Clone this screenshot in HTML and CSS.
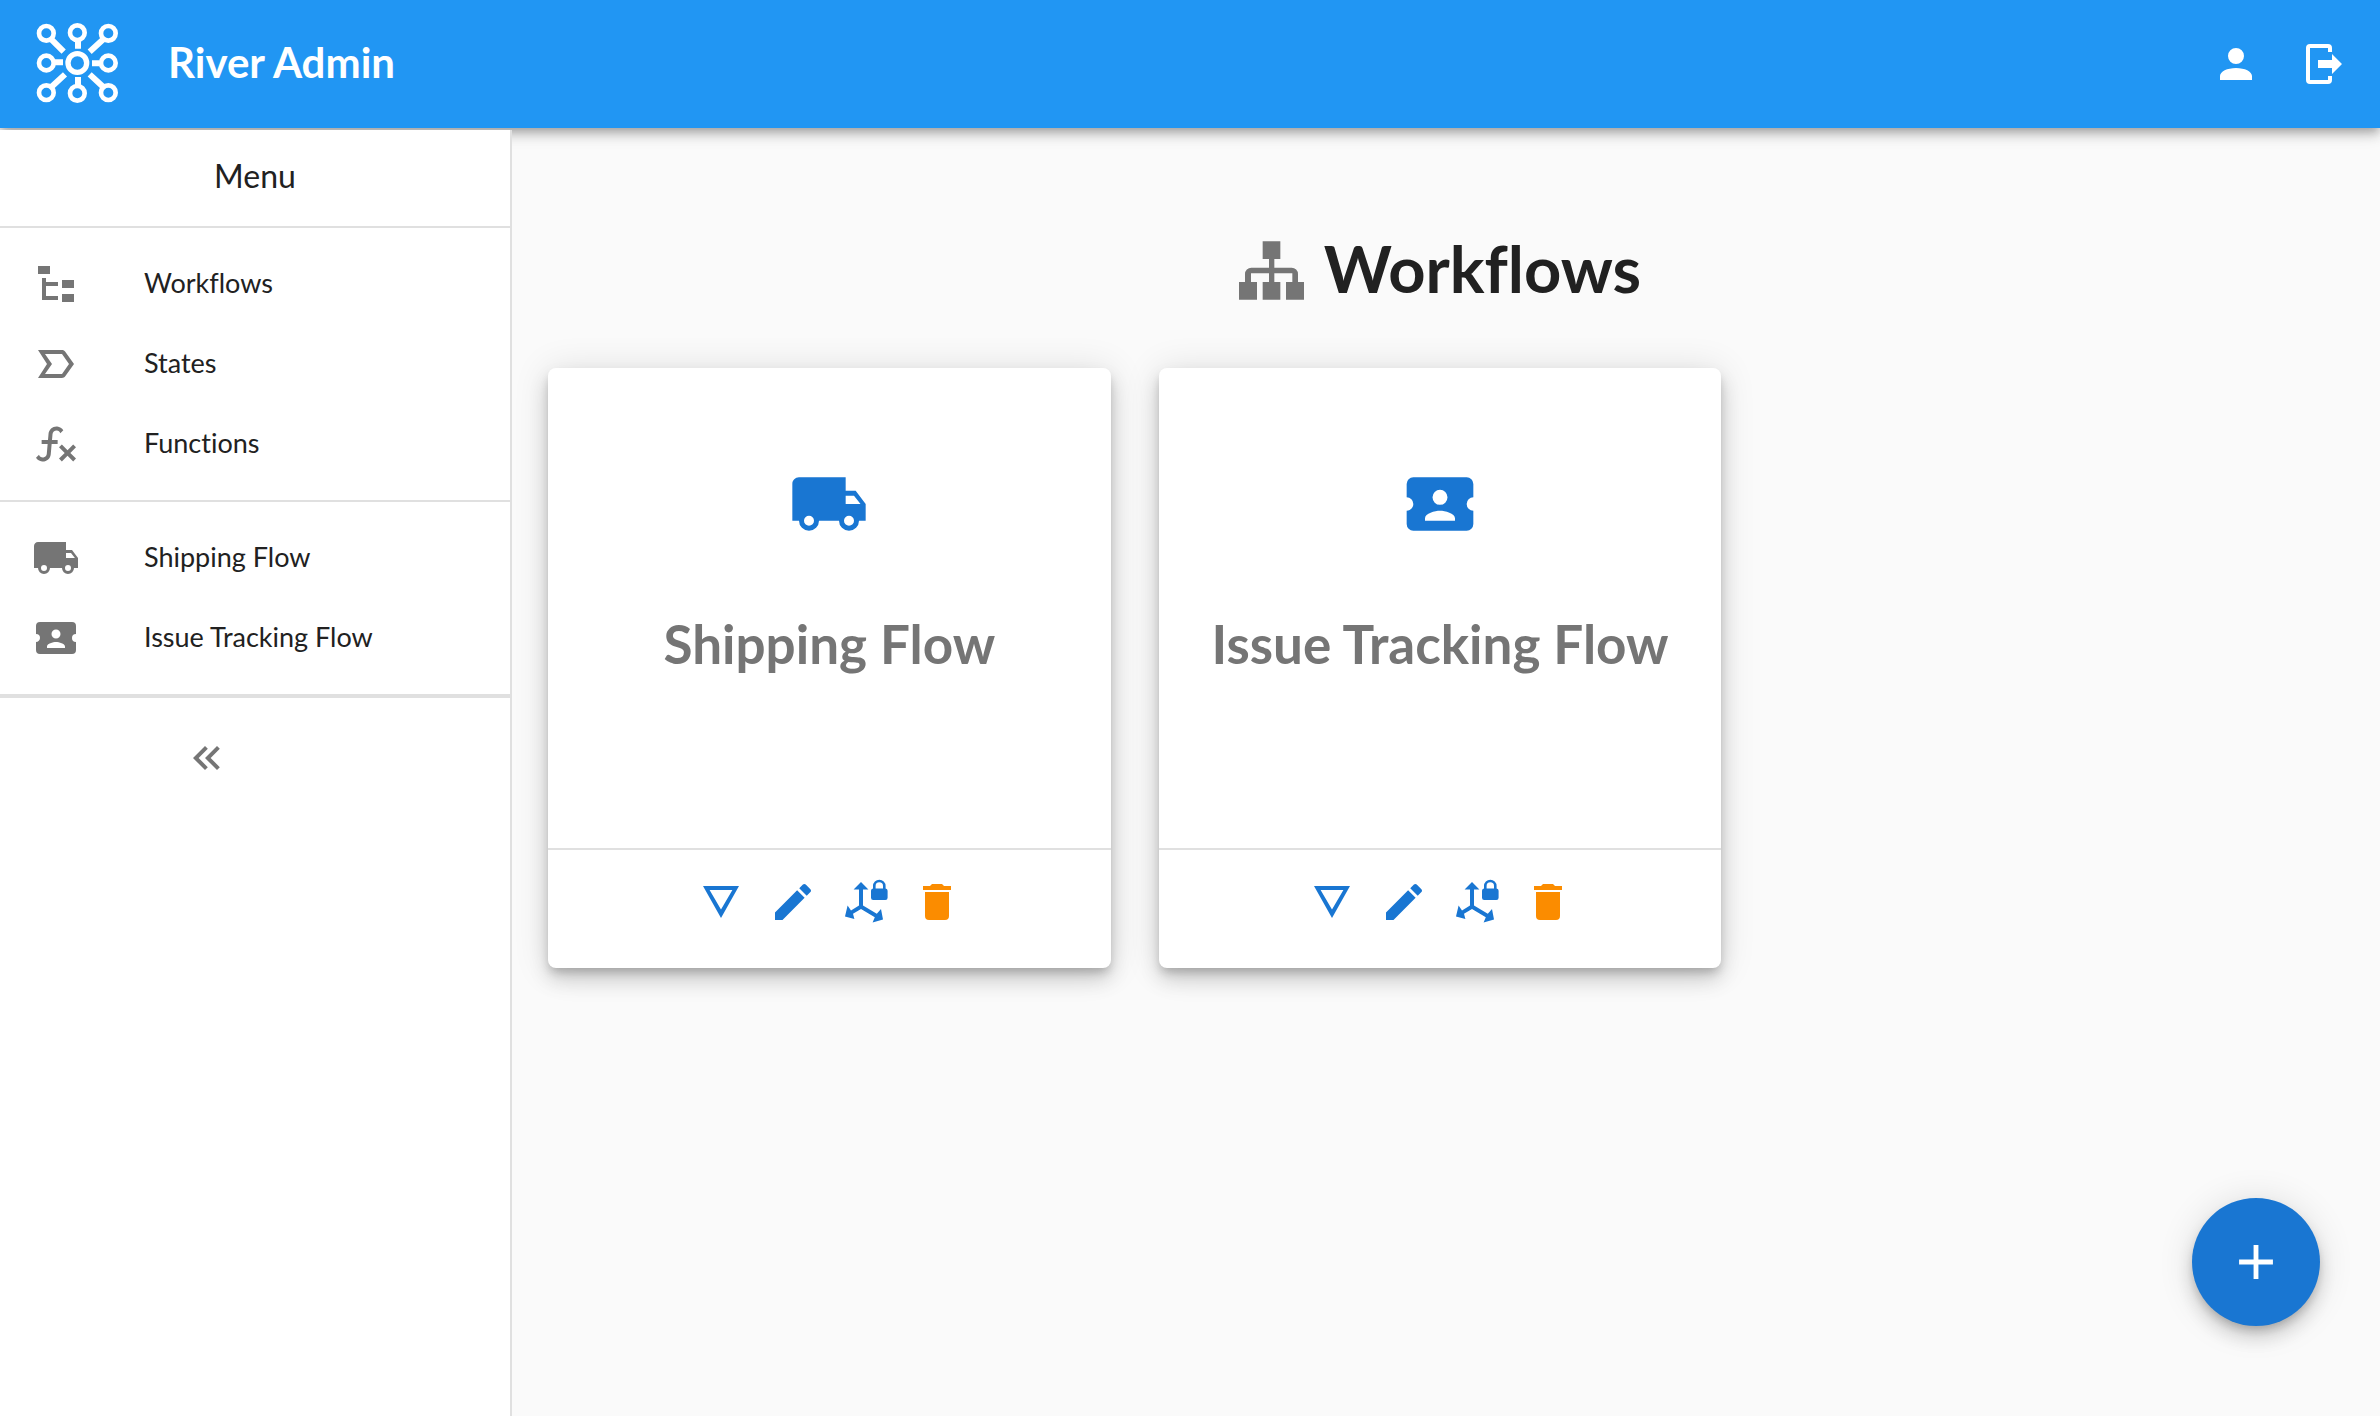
FILE: index.html
```html
<!DOCTYPE html>
<html lang="en">
<head>
  <meta charset="utf-8">
  <meta name="viewport" content="width=device-width, initial-scale=1">
  <title>River Admin</title>
  <link rel="stylesheet" href="styles.css">
</head>
<body>
  <svg class="sprite" aria-hidden="true">
    <symbol id="truck" viewBox="0 0 24 24"><path d="M18,18.5A1.5,1.5 0 0,1 16.5,17A1.5,1.5 0 0,1 18,15.5A1.5,1.5 0 0,1 19.5,17A1.5,1.5 0 0,1 18,18.5M19.5,9.5L21.46,12H17V9.5M6,18.5A1.5,1.5 0 0,1 4.5,17A1.5,1.5 0 0,1 6,15.5A1.5,1.5 0 0,1 7.5,17A1.5,1.5 0 0,1 6,18.5M20,8H17V4H3C1.89,4 1,4.89 1,6V17H3A3,3 0 0,0 6,20A3,3 0 0,0 9,17H15A3,3 0 0,0 18,20A3,3 0 0,0 21,17H23V12L20,8Z"/></symbol>
    <symbol id="ticket" viewBox="0 0 24 24"><path d="M20,12A2,2 0 0,0 22,14V18A2,2 0 0,1 20,20H4A2,2 0 0,1 2,18V14C3.11,14 4,13.1 4,12A2,2 0 0,0 2,10V6A2,2 0 0,1 4,4H20A2,2 0 0,1 22,6V10A2,2 0 0,0 20,12M16.5,16.25C16.5,14.75 13.5,14 12,14C10.5,14 7.5,14.75 7.5,16.25V17H16.5V16.25M12,12.25A2.25,2.25 0 0,0 14.25,10A2.25,2.25 0 0,0 12,7.75A2.25,2.25 0 0,0 9.75,10A2.25,2.25 0 0,0 12,12.25Z"/></symbol>
    <symbol id="details" viewBox="0 0 24 24"><path d="M6.3,6H17.7L12,15.8L6.3,6M3,4L12,20L21,4H3Z"/></symbol>
    <symbol id="pencil" viewBox="0 0 24 24"><path d="M20.71,7.04C21.1,6.65 21.1,6 20.71,5.63L18.37,3.29C18,2.9 17.35,2.9 16.96,3.29L15.12,5.12L18.87,8.87M3,17.25V21H6.75L17.81,9.93L14.06,6.18L3,17.25Z"/></symbol>
    <symbol id="axis-lock" viewBox="0 0 24 24">
      <path d="M10,2L13.7,5.8H11V13.7L17.9,17.9L20,15.5L21,20.7L15.8,22.2L16.9,19.6L10,15.5L6,17.9L6.7,20.5L2,19.3L3.3,13.8L5,16.2L9,13.7V5.8H6.3Z"/>
      <path d="M16,5.3V4A3.15,3.15 0 0,1 22.3,4V5.3A1.1,1.1 0 0,1 23.3,6.4V9.9A1.1,1.1 0 0,1 22.2,11H16.1A1.1,1.1 0 0,1 15,9.9V6.4A1.1,1.1 0 0,1 16,5.3M17.3,5.2H21V4A1.85,1.85 0 0,0 17.3,4Z"/>
    </symbol>
    <symbol id="trash" viewBox="0 0 24 24"><path d="M19,4H15.5L14.5,3H9.5L8.5,4H5V6H19M6,19A2,2 0 0,0 8,21H16A2,2 0 0,0 18,19V7H6V19Z"/></symbol>
  </svg>

  <header class="topbar">
    <svg class="logo" viewBox="0 0 288 288" aria-hidden="true">
      <g stroke-width="14">
        <circle cx="49" cy="52" r="22"/><circle cx="142" cy="50" r="22"/><circle cx="235" cy="52" r="22"/>
        <circle cx="49" cy="141" r="22"/><circle cx="235" cy="141" r="22"/>
        <circle cx="49" cy="230" r="22"/><circle cx="142" cy="232" r="22"/><circle cx="235" cy="230" r="22"/>
      </g>
      <circle cx="142" cy="141" r="28" stroke-width="16"/>
      <path stroke-width="18" d="M144,75V98M144,183V207M75,139H99M186,142H209M64,70L101,107M220,70L179,107M64,213L105,175M220,213L179,175"/>
    </svg>
    <a class="brand" href="#">River Admin</a>
    <nav class="topbar-actions" aria-label="Account">
      <button class="icon-button" type="button" aria-label="Profile">
        <svg class="icon" viewBox="0 0 24 24"><path d="M12,4A4,4 0 0,1 16,8A4,4 0 0,1 12,12A4,4 0 0,1 8,8A4,4 0 0,1 12,4M12,14C16.42,14 20,15.79 20,18V20H4V18C4,15.79 7.58,14 12,14Z"/></svg>
      </button>
      <button class="icon-button" type="button" aria-label="Log out">
        <svg class="icon" viewBox="0 0 24 24"><path d="M14,6V4H5V20H14V18H16V20A2,2 0 0,1 14,22H5A2,2 0 0,1 3,20V4A2,2 0 0,1 5,2H14A2,2 0 0,1 16,4V6ZM9,10H16V7L21,12L16,17V14H9Z"/></svg>
      </button>
    </nav>
  </header>

  <div class="layout">
    <aside class="sidebar">
      <h2 class="sidebar-title">Menu</h2>
      <nav class="menu" aria-label="Sections">
        <a class="menu-item" href="#">
          <svg class="icon" viewBox="0 0 24 24"><path d="M3,3H9V7H3V3M15,10H21V14H15V10M15,17H21V21H15V17M13,13H7V18H13V20H5V9H7V11H13V13Z"/></svg>
          <span class="menu-label">Workflows</span>
        </a>
        <a class="menu-item" href="#">
          <svg class="icon" viewBox="0 0 24 24"><path d="M15,19H3L7.5,12L3,5H15C15.65,5 16.26,5.31 16.63,5.84L21,12L16.63,18.16C16.26,18.68 15.65,19 15,19ZM6.5,17H15L18.5,12L15,7H6.5L10,12L6.5,17Z"/></svg>
          <span class="menu-label">States</span>
        </a>
        <a class="menu-item" href="#">
          <svg class="icon" viewBox="0 0 24 24"><path d="M12.42,5.29C11.32,5.19 10.35,6 10.25,7.11L10,10H12.82V12H9.82L9.38,17.07C9.18,19.27 7.24,20.9 5.04,20.7C3.79,20.59 2.66,19.9 2,18.83L3.5,17.33C3.83,18.38 4.96,18.97 6,18.63C6.78,18.39 7.33,17.7 7.4,16.89L7.82,12H4.82V10H8L8.27,6.93C8.46,4.73 10.39,3.1 12.6,3.28C13.86,3.39 15,4.09 15.66,5.17L14.16,6.67C13.91,5.9 13.23,5.36 12.42,5.29M22,13.65L20.59,12.24L17.76,15.07L14.93,12.24L13.5,13.65L16.35,16.5L13.5,19.31L14.93,20.72L17.76,17.9L20.59,20.72L22,19.31L19.17,16.5L22,13.65Z"/></svg>
          <span class="menu-label">Functions</span>
        </a>
      </nav>
      <nav class="menu" aria-label="Workflows">
        <a class="menu-item" href="#">
          <svg class="icon"><use href="#truck"/></svg>
          <span class="menu-label">Shipping Flow</span>
        </a>
        <a class="menu-item" href="#">
          <svg class="icon"><use href="#ticket"/></svg>
          <span class="menu-label">Issue Tracking Flow</span>
        </a>
      </nav>
      <div class="sidebar-footer">
        <button class="icon-button" type="button" aria-label="Collapse menu">
          <svg class="icon" viewBox="0 0 24 24"><path d="M18.41,7.41L17,6L11,12L17,18L18.41,16.59L13.83,12L18.41,7.41M12.41,7.41L11,6L5,12L11,18L12.41,16.59L7.83,12L12.41,7.41Z"/></svg>
        </button>
      </div>
    </aside>

    <main class="content">
      <h1 class="page-title">
        <svg class="page-icon" viewBox="0 0 195 177" aria-hidden="true"><path d="M71,1H124V54H106V80H158A19,19 0 0,1 177,99V123H195V176H141V123H160V97H106V123H124V176H71V123H90V97H36V123H54V176H0V123H18V99A19,19 0 0,1 37,80H90V54H71Z"/></svg>
        <span class="page-name">Workflows</span>
      </h1>
      <div class="cards">
        <article class="card">
          <div class="card-body">
            <svg class="card-icon" aria-hidden="true"><use href="#truck"/></svg>
            <h2 class="card-title">Shipping Flow</h2>
          </div>
          <div class="card-actions">
            <button class="icon-button" type="button" aria-label="Details"><svg class="icon"><use href="#details"/></svg></button>
            <button class="icon-button" type="button" aria-label="Edit"><svg class="icon"><use href="#pencil"/></svg></button>
            <button class="icon-button" type="button" aria-label="Permissions"><svg class="icon"><use href="#axis-lock"/></svg></button>
            <button class="icon-button danger" type="button" aria-label="Delete"><svg class="icon"><use href="#trash"/></svg></button>
          </div>
        </article>
        <article class="card">
          <div class="card-body">
            <svg class="card-icon" aria-hidden="true"><use href="#ticket"/></svg>
            <h2 class="card-title">Issue Tracking Flow</h2>
          </div>
          <div class="card-actions">
            <button class="icon-button" type="button" aria-label="Details"><svg class="icon"><use href="#details"/></svg></button>
            <button class="icon-button" type="button" aria-label="Edit"><svg class="icon"><use href="#pencil"/></svg></button>
            <button class="icon-button" type="button" aria-label="Permissions"><svg class="icon"><use href="#axis-lock"/></svg></button>
            <button class="icon-button danger" type="button" aria-label="Delete"><svg class="icon"><use href="#trash"/></svg></button>
          </div>
        </article>
      </div>
    </main>
  </div>

  <button class="fab" type="button" aria-label="Add workflow">
    <svg class="fab-icon" viewBox="0 0 24 24"><path d="M19,13H13V19H11V13H5V11H11V5H13V11H19V13Z"/></svg>
  </button>
</body>
</html>
```
FILE: styles.css
```css
:root {
  --bar: #2196f3;
  --primary: #1976d2;
  --danger: #fb8c00;
  --text: #212121;
  --muted: #757575;
  --line: #e0e0e0;
  --raised: 0 6px 10px -2px rgba(0, 0, 0, .2), 0 12px 20px rgba(0, 0, 0, .14), 0 2px 36px rgba(0, 0, 0, .12);
}

* {
  box-sizing: border-box;
}

body {
  display: flex;
  flex-direction: column;
  min-height: 100vh;
  margin: 0;
  background: #fafafa;
  color: var(--text);
  font-family: Lato, "Open Sans", sans-serif;
  font-variant-ligatures: none;
}

h1,
h2 {
  margin: 0;
}

a {
  color: inherit;
  text-decoration: none;
}

svg {
  display: block;
  flex: none;
  fill: currentColor;
}

.sprite {
  display: none;
}

.icon {
  width: 48px;
  height: 48px;
}

.icon-button {
  padding: 0;
  border: 0;
  background: none;
  color: inherit;
  cursor: pointer;
}

/* Top bar */
.topbar {
  position: relative;
  z-index: 1;
  display: flex;
  align-items: center;
  height: 128px;
  padding: 0 32px 0 30px;
  background: var(--bar);
  color: #fff;
  box-shadow: 0 4px 8px -2px rgba(0, 0, 0, .2), 0 8px 10px rgba(0, 0, 0, .14), 0 2px 20px rgba(0, 0, 0, .12);
}

.logo {
  width: 96px;
  height: 96px;
  fill: none;
  stroke: currentColor;
}

.brand {
  margin-left: 42px;
  padding-bottom: 4px;
  font-size: 42px;
  font-weight: 700;
}

.topbar-actions {
  display: flex;
  gap: 40px;
  margin-left: auto;
}

/* Sidebar */
.layout {
  display: flex;
  flex: 1;
}

.sidebar {
  position: relative;
  z-index: 2;
  flex: none;
  width: 512px;
  margin-top: 2px;
  border-right: 2px solid var(--line);
  background: #fff;
}

.sidebar-title {
  padding-bottom: 4px;
  border-bottom: 2px solid var(--line);
  font-size: 32px;
  font-weight: 400;
  line-height: 92px;
  text-align: center;
}

.menu {
  padding: 16px 0;
  border-bottom: 2px solid var(--line);
}

.menu:last-of-type {
  border-bottom-width: 4px;
}

.menu-item {
  display: flex;
  align-items: center;
  gap: 64px;
  height: 80px;
  padding: 0 32px;
}

.menu-item .icon,
.sidebar-footer {
  color: var(--muted);
}

.menu-label {
  padding-bottom: 4px;
  font-size: 27px;
}

.sidebar-footer {
  display: flex;
  justify-content: center;
  padding: 36px 96px 36px 0;
}

/* Content */
.content {
  flex: 1;
  padding: 108px 48px 48px 36px;
}

.page-title {
  display: flex;
  align-items: center;
  justify-content: center;
  gap: 20px;
  margin-bottom: 64px;
  font-size: 65px;
  font-weight: 700;
  line-height: 64px;
}

.page-icon {
  width: 65px;
  height: 59px;
  color: var(--muted);
}

.page-name {
  padding-bottom: 4px;
}

.cards {
  display: grid;
  grid-template-columns: repeat(3, 1fr);
  gap: 48px;
}

.card {
  border-radius: 8px;
  background: #fff;
  box-shadow: var(--raised);
}

.card-body {
  display: flex;
  flex-direction: column;
  align-items: center;
  gap: 68px;
  min-height: 480px;
  padding: 96px 24px;
}

.card-icon {
  width: 80px;
  height: 80px;
  color: var(--primary);
}

.card-title {
  color: var(--muted);
  font-size: 53px;
  font-weight: 700;
  line-height: 64px;
  text-align: center;
}

.card-actions {
  display: flex;
  justify-content: center;
  gap: 24px;
  padding: 28px 24px 42px;
  border-top: 2px solid var(--line);
  color: var(--primary);
}

.card-actions .danger {
  color: var(--danger);
}

/* Floating add button */
.fab {
  position: fixed;
  right: 60px;
  bottom: 90px;
  z-index: 3;
  display: flex;
  align-items: center;
  justify-content: center;
  width: 128px;
  height: 128px;
  padding: 0;
  border: 0;
  border-radius: 50%;
  background: var(--primary);
  color: #fff;
  box-shadow: var(--raised);
  cursor: pointer;
}

.fab-icon {
  width: 58px;
  height: 58px;
}
```
